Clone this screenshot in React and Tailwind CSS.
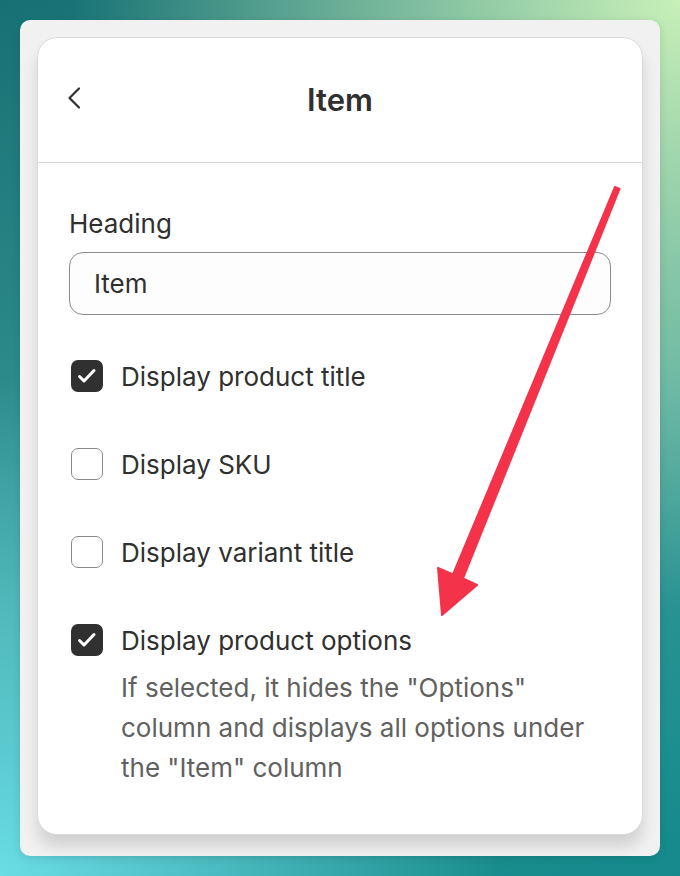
import React from "react";

const options = [
  { label: "Display product title", checked: true },
  { label: "Display SKU", checked: false },
  { label: "Display variant title", checked: false },
  {
    label: "Display product options",
    checked: true,
    help: [
      'If selected, it hides the "Options"',
      "column and displays all options under",
      'the "Item" column',
    ],
  },
];

function Checkbox({ checked }) {
  if (checked) {
    return (
      <span className="w-8 h-8 ml-[2px] rounded-[7px] bg-[#303030] flex shrink-0">
        <svg className="w-8 h-8" viewBox="0 0 32 32" fill="none" stroke="#fff" strokeWidth="3" strokeLinecap="round" strokeLinejoin="round">
          <path d="M8.5 16.5l4.5 4.5 10-10.5" />
        </svg>
      </span>
    );
  }
  return <span className="w-8 h-8 ml-[2px] rounded-[7px] border-[1.5px] border-[#8a8a8a] bg-white shrink-0" />;
}

export default function App() {
  return (
    <div className="relative w-[680px] h-[876px] p-5 overflow-hidden bg-[radial-gradient(circle_at_100%_0%,#c8f0b8,transparent_55%),radial-gradient(circle_at_0%_100%,#6adce4,transparent_45%),linear-gradient(160deg,#177174,#3a9a98_55%,#138a8c)] font-['Inter','Noto_Sans',sans-serif]">
      <div className="w-[640px] h-[836px] bg-[#f1f1f1] rounded-[10px] pt-[17px] px-[17px] pb-[21px] shadow-[0_2px_8px_rgba(0,0,0,0.12)]">
        <div className="h-[798px] bg-white rounded-[20px] border border-[#d9d9d9] shadow-[0_12px_14px_rgba(0,0,0,0.13)] flex flex-col">
          <div className="relative h-[125px] border-b border-[#d6d6d6] flex items-center justify-center shrink-0">
            <svg className="absolute left-[28px] top-[48px] w-4 h-6" viewBox="0 0 16 24" fill="none" stroke="#303030" strokeWidth="2.2" strokeLinecap="round" strokeLinejoin="round">
              <path d="M13 2.5L3.5 12l9.5 9.5" />
            </svg>
            <span className="text-[31px] font-semibold text-[#303030] leading-none pb-[2px]">Item</span>
          </div>
          <div className="pt-[45px] pl-[31px] pr-[31px]">
            <div className="text-[26px] leading-8 text-[#303030]">Heading</div>
            <div className="mt-3 h-[63px] rounded-[14px] border border-[#8a8a8a] bg-[#fdfdfd] flex items-center px-6 text-[26px] text-[#303030]">
              Item
            </div>
            <div className="mt-[41px] flex flex-col gap-12">
              {options.map((o) => (
                <div key={o.label}>
                  <div className="flex items-center gap-[18px] h-10">
                    <Checkbox checked={o.checked} />
                    <span className="text-[26px] text-[#303030]">{o.label}</span>
                  </div>
                  {o.help && (
                    <div className="mt-2 pl-[52px] text-[26px] leading-10 text-[#616161]">
                      {o.help.map((l) => (
                        <div key={l}>{l}</div>
                      ))}
                    </div>
                  )}
                </div>
              ))}
            </div>
          </div>
        </div>
      </div>
      <svg className="absolute inset-0 w-[680px] h-[876px] pointer-events-none" viewBox="0 0 680 876">
        <polygon
          points="615,187 619.5,189 463,578.5 477,585 442,615 438,568 453,574.5"
          fill="#f4334a"
          stroke="#f4334a"
          strokeWidth="2"
          strokeLinejoin="round"
        />
      </svg>
    </div>
  );
}
